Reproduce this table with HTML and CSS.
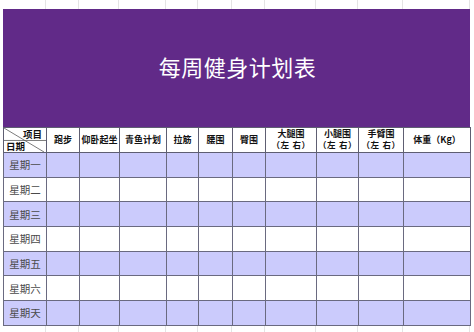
FILE: index.html
```html
<!DOCTYPE html>
<html lang="zh-CN">
<head>
<meta charset="utf-8">
<title>每周健身计划表</title>
<link rel="stylesheet" href="styles.css">
</head>
<body>
<div class="sheet">
  <div class="strip top">
    <span style="width:43px"></span><span style="width:33px"></span><span style="width:40px"></span><span style="width:47px"></span><span style="width:32px"></span><span style="width:34px"></span><span style="width:33px"></span><span style="width:51px"></span><span style="width:42px"></span><span style="width:45px"></span><span style="width:67px"></span>
  </div>
  <div class="title">每周健身计划表</div>
  <table class="plan">
    <colgroup>
      <col style="width:43px"><col style="width:33px"><col style="width:40px"><col style="width:47px"><col style="width:32px"><col style="width:34px"><col style="width:33px"><col style="width:51px"><col style="width:42px"><col style="width:45px"><col style="width:67px">
    </colgroup>
    <thead>
      <tr class="head">
        <th class="corner">
          <svg class="diag" width="43" height="25" viewBox="0 0 43 25" preserveAspectRatio="none"><line x1="0" y1="0" x2="41" y2="25" stroke="#555" stroke-width="0.8"/><line x1="0" y1="13" x2="43" y2="13" stroke="#555" stroke-width="0.8"/></svg>
          <span class="c-top">项目</span>
          <span class="c-bot">日期</span>
        </th>
        <th>跑步</th>
        <th>仰卧起坐</th>
        <th>青鱼计划</th>
        <th>拉筋</th>
        <th>腰围</th>
        <th>臀围</th>
        <th><span class="l1">大腿围</span><span class="l2">（左 右）</span></th>
        <th><span class="l1">小腿围</span><span class="l2">（左 右）</span></th>
        <th><span class="l1">手臂围</span><span class="l2">（左 右）</span></th>
        <th>体重（Kg）</th>
      </tr>
    </thead>
    <tbody>
      <tr class="alt"><td class="day">星期一</td><td></td><td></td><td></td><td></td><td></td><td></td><td></td><td></td><td></td><td></td></tr>
      <tr><td class="day">星期二</td><td></td><td></td><td></td><td></td><td></td><td></td><td></td><td></td><td></td><td></td></tr>
      <tr class="alt"><td class="day">星期三</td><td></td><td></td><td></td><td></td><td></td><td></td><td></td><td></td><td></td><td></td></tr>
      <tr><td class="day">星期四</td><td></td><td></td><td></td><td></td><td></td><td></td><td></td><td></td><td></td><td></td></tr>
      <tr class="alt"><td class="day">星期五</td><td></td><td></td><td></td><td></td><td></td><td></td><td></td><td></td><td></td><td></td></tr>
      <tr><td class="day">星期六</td><td></td><td></td><td></td><td></td><td></td><td></td><td></td><td></td><td></td><td></td></tr>
      <tr class="alt"><td class="day">星期天</td><td></td><td></td><td></td><td></td><td></td><td></td><td></td><td></td><td></td><td></td></tr>
    </tbody>
  </table>
  <div class="strip bottom">
    <span style="width:43px"></span><span style="width:33px"></span><span style="width:40px"></span><span style="width:47px"></span><span style="width:32px"></span><span style="width:34px"></span><span style="width:33px"></span><span style="width:51px"></span><span style="width:42px"></span><span style="width:45px"></span><span style="width:67px"></span>
  </div>
</div>
</body>
</html>
```
FILE: styles.css
```css
html, body {
  margin: 0;
  padding: 0;
  background: #ffffff;
}
body {
  font-family: "Noto Sans CJK SC", "Noto Sans", sans-serif;
  width: 474px;
  height: 332px;
  overflow: hidden;
}
.sheet {
  padding-left: 3px;
  width: 467px;
}
.strip {
  display: flex;
  box-sizing: border-box;
}
.strip span {
  display: block;
  box-sizing: border-box;
  border-right: 1px solid #e4e4e4;
}
.strip.top {
  height: 9px;
}
.strip.bottom {
  height: 8px;
}
.title {
  height: 119px;
  background: #612a88;
  color: #ffffff;
  font-size: 22px;
  display: flex;
  align-items: center;
  justify-content: center;
  letter-spacing: 0.5px;
  padding-left: 2px;
  padding-bottom: 6px;
  box-sizing: border-box;
}
.plan {
  border-collapse: collapse;
  table-layout: fixed;
  width: 468px;
  margin-top: -1px;
}
.plan th, .plan td {
  border: 1px solid #5e5e72;
  padding: 0;
  text-align: center;
  vertical-align: middle;
}
.plan tbody td {
  border-color: #6a6a80;
}
.plan .head th {
  height: 24px;
  font-size: 9px;
  font-weight: 700;
  color: #111;
  line-height: 12px;
  background: #fff;
  white-space: nowrap;
  overflow: hidden;
}
.l1, .l2 {
  display: block;
  font-family: "Liberation Sans", "Noto Sans CJK SC", sans-serif;
  line-height: 11px;
  height: 11px;
}
.l2 {
  font-size: 8.5px;
  letter-spacing: 0.5px;
}
.corner {
  position: relative;
  overflow: hidden;
}
.diag {
  position: absolute;
  left: 0;
  top: 0;
  width: 100%;
  height: 100%;
}
.c-top {
  position: absolute;
  right: 4px;
  top: 0px;
  font-size: 9.5px;
  line-height: 12px;
}
.c-bot {
  position: absolute;
  left: 2px;
  bottom: 0px;
  font-size: 9.5px;
  line-height: 12px;
}
.plan tbody tr {
  height: 24.7px;
}
.plan tbody tr.alt td {
  background: #cbcbfc;
}
.plan td.day {
  font-size: 10.5px;
  color: #4a4a4a;
}
```
